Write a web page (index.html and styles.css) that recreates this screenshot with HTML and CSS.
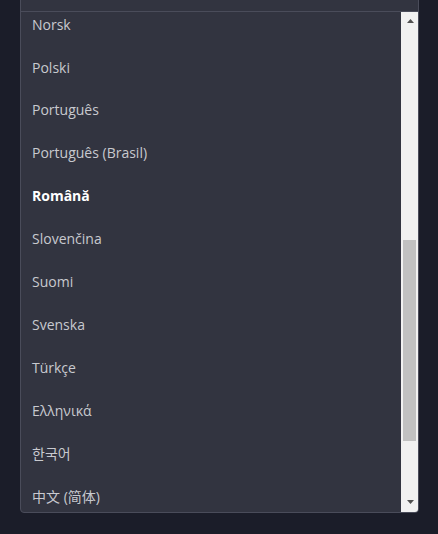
FILE: index.html
```html
<!DOCTYPE html>
<html lang="en">
<head>
<meta charset="utf-8">
<title>Language</title>
<link rel="stylesheet" href="styles.css">
</head>
<body>
<div class="dropdown">
  <div class="dropdown-head"></div>
  <div class="dropdown-body">
    <ul class="list" id="list">
      <li class="item">Bahasa Indonesia</li>
      <li class="item">Català</li>
      <li class="item">Čeština</li>
      <li class="item">Dansk</li>
      <li class="item">Deutsch</li>
      <li class="item">English</li>
      <li class="item">Español</li>
      <li class="item">Français</li>
      <li class="item">Hrvatski</li>
      <li class="item">Italiano</li>
      <li class="item">Magyar</li>
      <li class="item">Nederlands</li>
      <li class="item">Norsk</li>
      <li class="item">Polski</li>
      <li class="item">Português</li>
      <li class="item">Português (Brasil)</li>
      <li class="item item-selected">Română</li>
      <li class="item">Slovenčina</li>
      <li class="item">Suomi</li>
      <li class="item">Svenska</li>
      <li class="item">Türkçe</li>
      <li class="item">Ελληνικά</li>
      <li class="item">한국어</li>
      <li class="item">中文 (简体)</li>
      <li class="item">中文 (繁體)</li>
      <li class="item">日本語</li>
      <li class="item">Русский</li>
    </ul>
    <div class="scrollbar">
      <div class="sb-button">
        <svg width="7" height="4" viewBox="0 0 7 4"><polygon points="3.5,0 7,4 0,4" fill="#505050"/></svg>
      </div>
      <div class="sb-track">
        <div class="sb-spacer" style="height:211px"></div>
        <div class="sb-thumb" style="height:201px"></div>
      </div>
      <div class="sb-button sb-button-down">
        <svg width="7" height="4" viewBox="0 0 7 4"><polygon points="0,0 7,0 3.5,4" fill="#505050"/></svg>
      </div>
    </div>
  </div>
</div>
<script src="script.js"></script>
</body>
</html>
```
FILE: styles.css
```css
html, body {
  margin: 0;
  padding: 0;
  background: #1b1d29;
  height: 100%;
  overflow: hidden;
}
body {
  font-family: "Open Sans", "Noto Sans", "Noto Sans CJK SC", "Noto Sans CJK KR", sans-serif;
}
.dropdown {
  margin: -30px 0 0 20px;
  width: 397px;
  background: #323440;
  border: 1px solid #4a4c5a;
  border-radius: 4px;
  overflow: hidden;
}
.dropdown-head {
  height: 40px;
  border-bottom: 1px solid #4a4c5a;
}
.dropdown-body {
  display: flex;
  height: 500px;
}
.list {
  flex: 1;
  list-style: none;
  margin: 0;
  padding: 0;
  height: 500px;
  overflow: hidden;
}
.item {
  height: 42.9px;
  display: flex;
  align-items: center;
  padding-left: 11px;
  font-size: 14px;
  color: #c8c9cf;
  white-space: nowrap;
}
.item-selected {
  color: #ffffff;
  font-weight: 700;
}
.scrollbar {
  width: 17px;
  background: #f1f1f1;
  display: flex;
  flex-direction: column;
}
.sb-button {
  height: 17px;
  display: flex;
  justify-content: center;
  align-items: flex-start;
  padding-top: 7px;
  box-sizing: border-box;
}
.sb-button svg {
  display: block;
  margin-left: 1px;
}
.sb-button-down {
  padding-top: 5px;
}
.sb-track {
  flex: 1;
  display: flex;
  flex-direction: column;
}
.sb-thumb {
  margin: 0 2px;
  background: #c1c1c1;
}
```
FILE: script.js
```js
document.getElementById('list').scrollTop = 524;
```
